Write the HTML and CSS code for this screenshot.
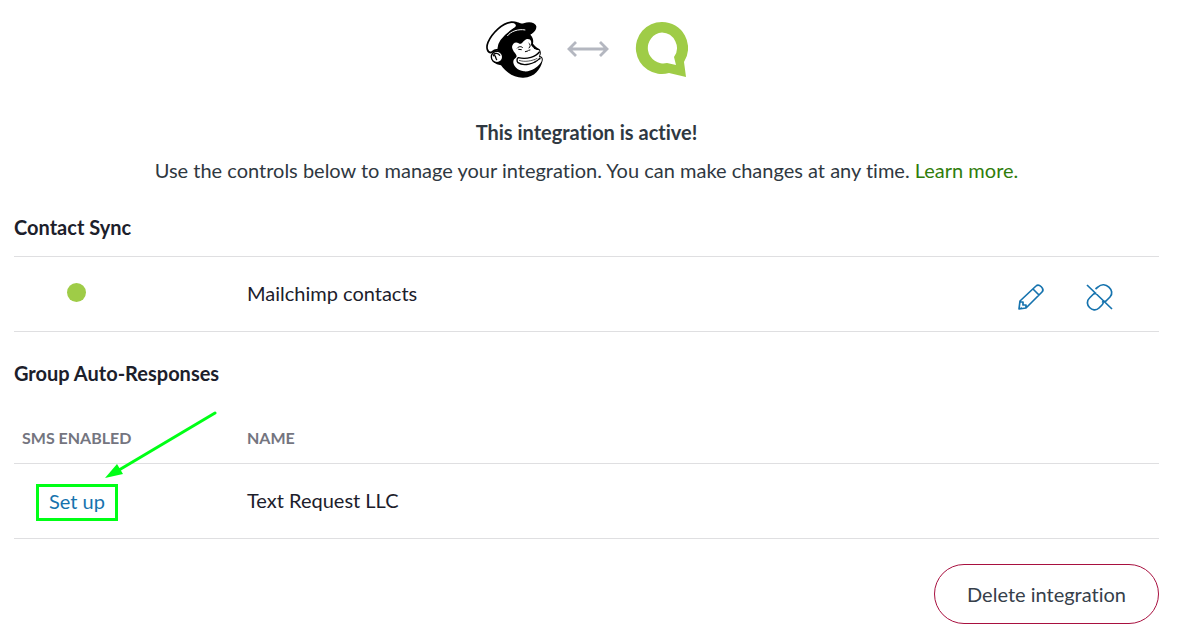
FILE: index.html
```html
<!DOCTYPE html>
<html lang="en">
<head>
<meta charset="utf-8">
<meta name="viewport" content="width=device-width, initial-scale=1">
<title>Mailchimp integration</title>
<link rel="stylesheet" href="styles.css">
</head>
<body>
<main class="page">
  <header class="intro">
    <div class="logos">
      <svg class="logo-chimp" viewBox="27 27 174 174" role="img" aria-label="Mailchimp">
        <path d="M66 88C78 72 100 54 118 44L176 40C178 54 168 61 160 68C170 78 169 88 168 95C174 102 180 108 188 112C193 120 192 127 189 132C197 133 199 141 196 149C190 170 174 196 139 197C112 198 88 182 72 160C52 157 40 144 43 130C46 120 52 115 61 116Z" fill="#000"/>
        <path d="M100 31C78 33 46 62 33 91C27 106 30 121 42 122C50 115 56 112 64 113C62 93 81 70 115 48C122 42 121 29 100 31Z" fill="#fff" stroke="#000" stroke-width="5"/>
        <path d="M99 29C125 26 130 38 140 34C157 27 174 31 178 43C179 55 168 65 157 69C139 60 119 61 87 77C94 61 109 51 120 42C116 34 111 31 99 29Z" fill="#000"/>
        <path d="M91 72C101 58 124 50 145 54" fill="none" stroke="#fff" stroke-width="3"/>
        <path d="M105 105C106 94 116 88 125 94C135 101 139 82 151 81C163 80 164 91 162 99C169 109 177 114 186 115C191 124 187 130 186 134C196 135 197 145 190 154C180 167 163 180 141 178C121 176 107 160 109 147C110 140 118 139 119 133C119 126 107 119 105 105Z" fill="#fff"/>
        <circle cx="60" cy="135" r="17" fill="#fff" stroke="#000" stroke-width="4"/>
        <path d="M69 131C63 121 50 123 50 131C58 129 54 139 60 144" fill="none" stroke="#000" stroke-width="4"/>
        <path d="M121 108C126 102 134 103 137 107M125 112L133 113M156 94C161 97 161 104 156 108M145 119L152 117M155 115L159 114" fill="none" stroke="#000" stroke-width="3" stroke-linecap="round"/>
        <path d="M187 120C177 134 151 143 124 137C119 139 119 148 123 152C140 164 172 156 188 139" fill="none" stroke="#000" stroke-width="4" stroke-linecap="round"/>
        <path d="M126 145C143 151 165 147 181 139M174 146L174 152M186 132C191 137 191 140 187 144" fill="none" stroke="#000" stroke-width="2"/>
        <path d="M171 108L183 112" fill="none" stroke="#000" stroke-width="4"/>
      </svg>
      <svg class="logo-arrow" viewBox="0 0 40 16" aria-hidden="true">
        <path d="M2 7H38M8 0L1 7L8 14M32 0L39 7L32 14" fill="none" stroke="#b4b7c0" stroke-width="2.8"/>
      </svg>
      <svg class="logo-request" viewBox="0 0 52 56" preserveAspectRatio="xMaxYMid meet" role="img" aria-label="Text Request">
        <path fill="#9fcc47" fill-rule="evenodd" d="M26 0A26 26 0 0 1 48 40L50 55L33 51A26 26 0 1 1 26 0ZM26 10.500A15.500 15.500 0 1 0 31 41L40 43L38 35A15.500 15.500 0 0 0 26 10.500Z"/>
      </svg>
    </div>
    <h1 class="title">This integration is active!</h1>
    <p class="lead">Use the controls below to manage your integration. You can make changes at any time. <a class="learn" href="#">Learn more.</a></p>
  </header>

  <section class="section">
    <h2 class="heading">Contact Sync</h2>
    <table class="table">
      <tbody>
        <tr class="row">
          <td class="cell cell-status"><span class="dot" role="img" aria-label="Active"></span></td>
          <td class="cell cell-name">Mailchimp contacts</td>
          <td class="cell cell-actions">
            <div class="actions">
              <button class="icon-button" type="button" aria-label="Edit">
                <svg class="icon" viewBox="0 0 26 26" aria-hidden="true">
                  <path d="M1 25L2 17L18 2C21 -1 27 5 24 8L8 24ZM15 5L21 11M2 18L5 18L5 21L8 21L8 24M1 25L4 24"/>
                </svg>
              </button>
              <button class="icon-button" type="button" aria-label="Unlink">
                <svg class="icon" viewBox="0 0 26 26" aria-hidden="true">
                  <path d="M0 1L25 25M8.500 5L11 3C18 -4 29 7 23 13L19 17Q17 18.500 15 17.500M9.500 9.500Q7.500 9 6 10.500L2.500 14C-4 20 6 30 12 24L15 21Q16.500 19.500 16 18.500"/>
                </svg>
              </button>
            </div>
          </td>
        </tr>
      </tbody>
    </table>
  </section>

  <section class="section">
    <h2 class="heading">Group Auto-Responses</h2>
    <table class="table table-groups">
      <thead>
        <tr>
          <th class="column column-status" scope="col">SMS ENABLED</th>
          <th class="column" scope="col">NAME</th>
        </tr>
      </thead>
      <tbody>
        <tr class="row">
          <td class="cell cell-status">
            <span class="callout">
              <a class="setup" href="#">Set up</a>
              <svg class="pointer" viewBox="0 0 112 68" aria-hidden="true">
                <path d="M110 2L14 59" fill="none" stroke="#00ff16" stroke-width="3" stroke-linecap="round"/>
                <path d="M0 67L12 53L18 63Z" fill="#00ff16"/>
              </svg>
            </span>
          </td>
          <td class="cell cell-name">Text Request LLC</td>
        </tr>
      </tbody>
    </table>
  </section>

  <footer class="footer">
    <button class="delete" type="button">Delete integration</button>
  </footer>
</main>
</body>
</html>
```
FILE: styles.css
```css
* {
  box-sizing: border-box;
}

body {
  margin: 0;
  background: #fff;
  color: #1c202b;
  font: 20px/24px Lato, "Open Sans", sans-serif;
  font-variant-ligatures: none;
}

.page {
  padding: 21px 37px 20px 14px;
}

.intro {
  color: #2f3841;
  text-align: center;
}

.logos {
  display: flex;
  justify-content: center;
  align-items: center;
  gap: 24px;
}

.logo-chimp {
  width: 58px;
  height: 58px;
}

.logo-arrow {
  width: 40px;
  height: 16px;
  overflow: visible;
}

.logo-request {
  width: 56px;
  height: 56px;
}

.title {
  margin: 41px 0 0;
  font-size: 20px;
  font-weight: 700;
}

.lead {
  margin: 14px 0 0;
}

.learn {
  color: #2f7d0b;
  text-decoration: none;
}

.section {
  margin-top: 29px;
}

.intro + .section {
  margin-top: 33px;
}

.heading {
  margin: 0 0 17px;
  font-size: 20px;
  font-weight: 700;
}

.table {
  width: 100%;
  border-collapse: collapse;
  table-layout: fixed;
}

.row {
  height: 75px;
  border-top: 1px solid #dfdfe1;
  border-bottom: 1px solid #dfdfe1;
}

.cell {
  padding: 0 8px;
}

.cell-name {
  padding-bottom: 2px;
}

.cell-status {
  width: 225px;
  padding-left: 22px;
}

.cell-actions {
  width: 200px;
  padding-right: 46px;
}

.dot {
  display: block;
  width: 19px;
  height: 19px;
  margin: 0 0 4px 31px;
  border-radius: 50%;
  background: #9fcc47;
}

.actions {
  display: flex;
  justify-content: flex-end;
  gap: 43px;
  padding-top: 5px;
}

.icon-button {
  display: flex;
  padding: 0;
  border: 0;
  background: none;
  cursor: pointer;
}

.icon {
  width: 26px;
  height: 26px;
  fill: none;
  stroke: #1673ae;
  stroke-width: 1.7;
  stroke-linejoin: round;
  overflow: visible;
}

.column {
  height: 50px;
  padding: 0 8px;
  color: #74757f;
  font-size: 16px;
  font-weight: 700;
  text-align: left;
}

.column-status {
  width: 225px;
}

.table-groups {
  margin-top: 28px;
}

.callout {
  display: inline-block;
  position: relative;
  margin-top: 3px;
}

.setup {
  display: block;
  padding: 2px 10px 5px;
  border: 3px solid #00ff16;
  color: #1673ae;
  text-decoration: none;
}

.pointer {
  position: absolute;
  left: 69px;
  bottom: 42px;
  width: 112px;
  height: 68px;
}

.footer {
  display: flex;
  justify-content: flex-end;
  margin-top: 25px;
}

.delete {
  height: 60px;
  padding: 0 32px;
  border: 1px solid #a8103f;
  border-radius: 30px;
  background: #fff;
  color: #36404a;
  font: inherit;
  font-variant-ligatures: none;
  cursor: pointer;
}
```
